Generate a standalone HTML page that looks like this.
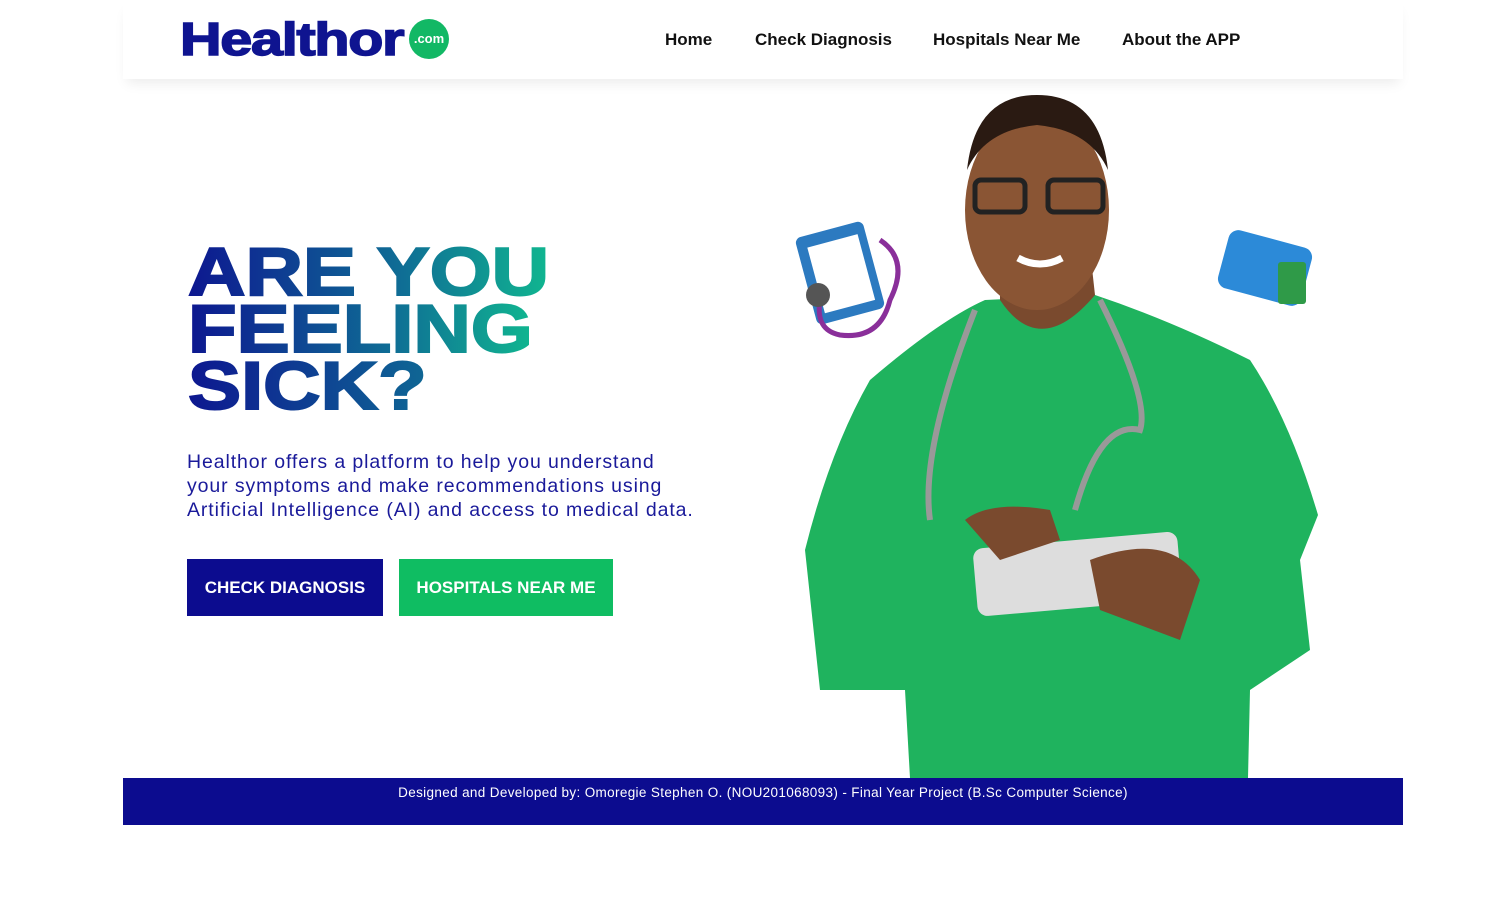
<!DOCTYPE html>
<html><head><style>
body{margin:0;width:1498px;height:907px;background:#fff;font-family:"Liberation Sans",sans-serif;position:relative;overflow:hidden}
.hdr{position:absolute;left:123px;top:0;width:1280px;height:79px;background:#fff;box-shadow:0 8px 12px -4px rgba(0,0,0,.08)}
.logo{position:absolute;left:180px;top:12px;font-size:46px;font-weight:bold;color:#0f1490;letter-spacing:-1px;transform-origin:0 0;transform:scaleX(1.25);-webkit-text-stroke:1.5px #0f1490}
.dot{position:absolute;left:409px;top:19px;width:40px;height:40px;border-radius:50%;background:#12b865;color:#fff;font-size:13px;font-weight:bold;text-align:center;line-height:40px}
.nav{position:absolute;top:30px;font-size:17px;font-weight:bold;color:#111}
.h{position:absolute;left:188px;font-size:68px;font-weight:900;line-height:1;transform-origin:0 0;transform:scaleX(1.17);background-image:linear-gradient(90deg,#0d1790,#0f6f95 60%,#10b690);-webkit-background-clip:text;background-clip:text;color:transparent;white-space:nowrap;-webkit-text-stroke:2px transparent}
.p{position:absolute;left:187px;top:450px;font-size:19.5px;line-height:24px;color:#1a1a9a;letter-spacing:.9px;white-space:nowrap}
.btn{position:absolute;top:559px;height:57px;line-height:57px;color:#fff;font-size:17px;font-weight:bold;text-align:center}
.ft{position:absolute;left:123px;top:778px;width:1280px;height:47px;background:#0c0c8f;color:#fff;font-size:13.5px;text-align:center;line-height:30px;letter-spacing:.35px}
</style></head><body>
<div class="hdr"></div>
<div class="logo">Healthor</div><div class="dot">.com</div>
<div class="nav" style="left:665px">Home</div>
<div class="nav" style="left:755px">Check Diagnosis</div>
<div class="nav" style="left:933px">Hospitals Near Me</div>
<div class="nav" style="left:1122px">About the APP</div>
<div class="h" style="top:238px">ARE YOU</div>
<div class="h" style="top:295px">FEELING</div>
<div class="h" style="top:352px;background-image:linear-gradient(90deg,#0d1790,#0f6f95 110%)">SICK?</div>
<div class="p">Healthor offers a platform to help you understand<br>your symptoms and make recommendations using<br>Artificial Intelligence (AI) and access to medical data.</div>
<div class="btn" style="left:187px;width:196px;background:#0c0c8f">CHECK DIAGNOSIS</div>
<div class="btn" style="left:399px;width:214px;background:#0fbd62">HOSPITALS NEAR ME</div>
<svg style="position:absolute;left:0;top:0" width="1498" height="907">
<path d="M870 380 Q940 320 985 300 L1095 295 Q1170 320 1250 360 Q1290 420 1318 515 L1300 560 L1310 650 L1250 690 L1248 778 L910 778 L905 690 L820 690 L805 550 Q830 450 870 380Z" fill="#1fb35e"/>
<path d="M1000 300 Q1040 360 1095 295 L1090 250 L1000 250Z" fill="#7a4a2e"/>
<ellipse cx="1037" cy="210" rx="72" ry="100" fill="#8a5534"/>
<path d="M967 170 Q975 95 1037 95 Q1100 95 1108 170 Q1090 130 1037 125 Q985 130 967 170Z" fill="#2a1a12"/>
<rect x="975" y="180" width="50" height="32" rx="6" fill="none" stroke="#222" stroke-width="5"/>
<rect x="1048" y="180" width="55" height="32" rx="6" fill="none" stroke="#222" stroke-width="5"/>
<path d="M1018 258 Q1040 270 1062 258" stroke="#fff" stroke-width="7" fill="none"/>
<path d="M975 310 Q920 450 930 520 M1100 300 Q1150 400 1140 430 Q1100 420 1075 510" stroke="#999" stroke-width="6" fill="none"/>
<rect x="975" y="540" width="205" height="68" rx="10" fill="#ddd" transform="rotate(-5 1077 574)"/>
<path d="M965 520 Q990 500 1050 510 L1060 540 L1000 560Z M1090 560 Q1170 530 1200 580 L1180 640 L1100 610Z" fill="#7a4a2e"/>
<rect x="805" y="228" width="70" height="90" rx="6" fill="#2c7ac0" transform="rotate(-15 840 273)"/>
<rect x="815" y="240" width="52" height="68" fill="#fff" transform="rotate(-15 840 273)"/>
<path d="M880 240 Q910 260 890 300 Q880 340 840 335 Q815 330 820 300" stroke="#8a2f9a" stroke-width="5" fill="none"/>
<circle cx="818" cy="295" r="12" fill="#555"/>
<rect x="1222" y="238" width="86" height="60" rx="10" fill="#2c8ad8" transform="rotate(15 1265 268)"/>
<rect x="1278" y="262" width="28" height="42" rx="3" fill="#2f9a48"/>
</svg>
<div class="ft">Designed and Developed by: Omoregie Stephen O. (NOU201068093) - Final Year Project (B.Sc Computer Science)</div>
</body></html>
